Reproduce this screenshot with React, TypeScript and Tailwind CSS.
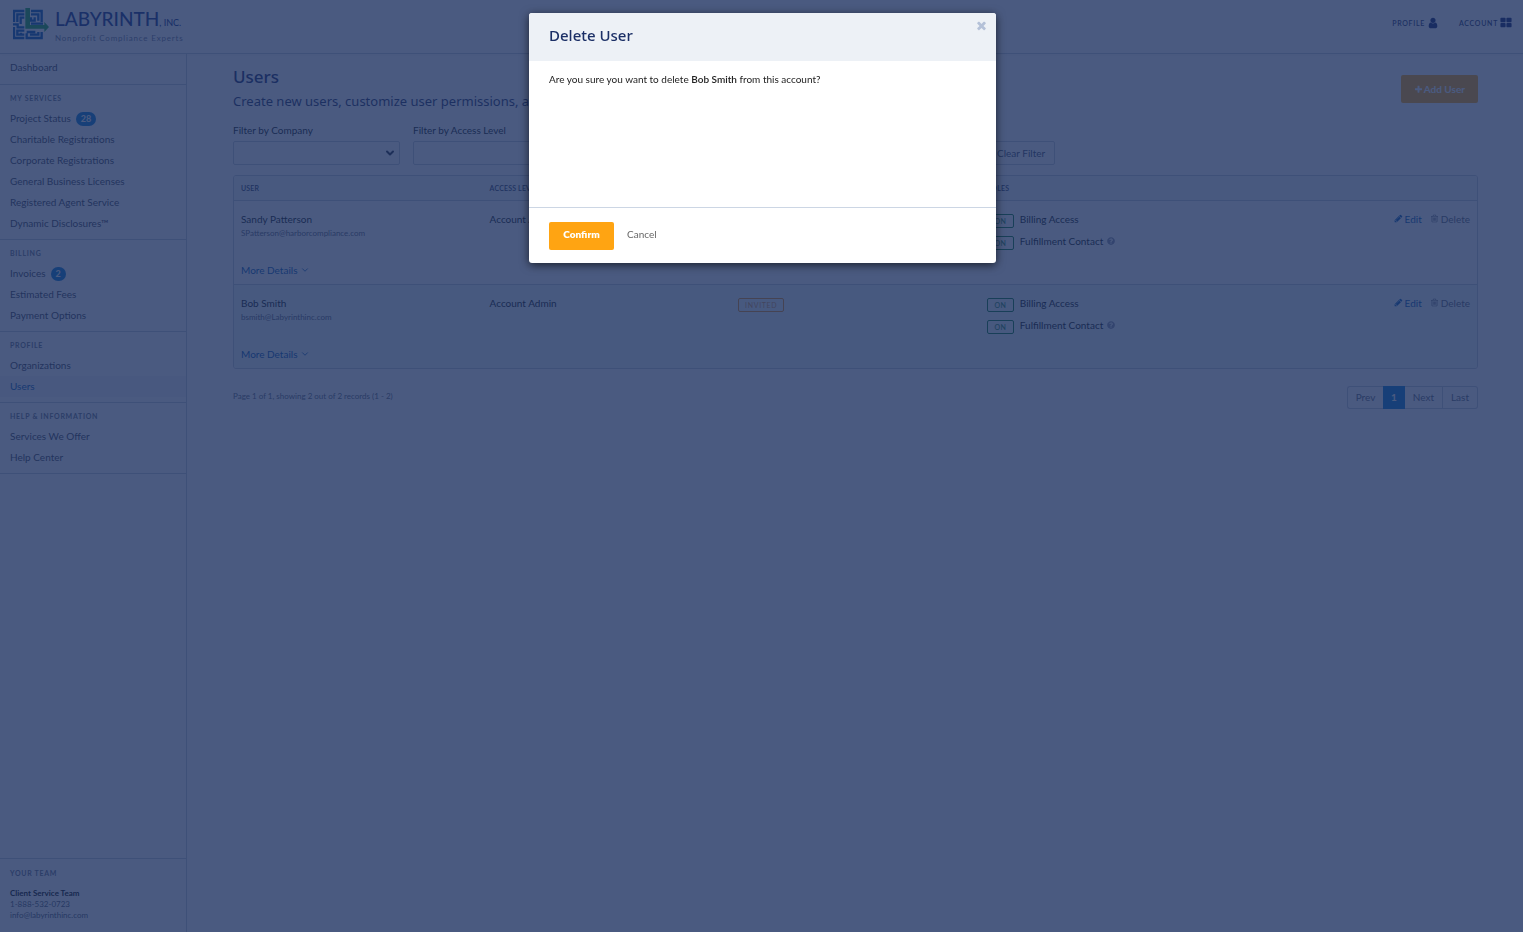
import type { ReactNode } from "react";
import { ChevronDown } from "lucide-react";
import { FaQuestionCircle } from "react-icons/fa";

const GLYPHS = {
  user: "M1536 1399q0 109-62.5 187t-150.5 78h-854q-88 0-150.5-78t-62.5-187q0-85 8.5-160.5t31.5-152 58.5-131 94-89 134.5-34.5q131 128 313 128t313-128q76 0 134.5 34.5t94 89 58.5 131 31.5 152 8.5 160.5zm-256-887q0 159-112.5 271.5t-271.5 112.5-271.5-112.5-112.5-271.5 112.5-271.5 271.5-112.5 271.5 112.5 112.5 271.5z",
  grid: "M832 1024v384q0 52-38 90t-90 38h-512q-52 0-90-38t-38-90v-384q0-52 38-90t90-38h512q52 0 90 38t38 90zm0-768v384q0 52-38 90t-90 38h-512q-52 0-90-38t-38-90v-384q0-52 38-90t90-38h512q52 0 90 38t38 90zm896 768v384q0 52-38 90t-90 38h-512q-52 0-90-38t-38-90v-384q0-52 38-90t90-38h512q52 0 90 38t38 90zm0-768v384q0 52-38 90t-90 38h-512q-52 0-90-38t-38-90v-384q0-52 38-90t90-38h512q52 0 90 38t38 90z",
  times: "M1490 1322q0 40-28 68l-136 136q-28 28-68 28t-68-28l-294-294-294 294q-28 28-68 28t-68-28l-136-136q-28-28-28-68t28-68l294-294-294-294q-28-28-28-68t28-68l136-136q28-28 68-28t68 28l294 294 294-294q28-28 68-28t68 28l136 136q28 28 28 68t-28 68l-294 294 294 294q28 28 28 68z",
  plus: "M1600 736v192q0 40-28 68t-68 28h-416v416q0 40-28 68t-68 28h-192q-40 0-68-28t-28-68v-416h-416q-40 0-68-28t-28-68v-192q0-40 28-68t68-28h416v-416q0-40 28-68t68-28h192q40 0 68 28t28 68v416h416q40 0 68 28t28 68z",
  pencil: "M491 1536l91-91-235-235-91 91v107h128v128h107zm523-928q0-22-22-22-10 0-17 7l-542 542q-7 7-7 17 0 22 22 22 10 0 17-7l542-542q7-7 7-17zm-54-192l416 416-832 832h-416v-416zm683 96q0 53-37 90l-166 166-416-416 166-165q36-38 90-38 53 0 91 38l235 234q37 39 37 91z",
  trash: "M704 736v576q0 14-9 23t-23 9h-64q-14 0-23-9t-9-23v-576q0-14 9-23t23-9h64q14 0 23 9t9 23zm256 0v576q0 14-9 23t-23 9h-64q-14 0-23-9t-9-23v-576q0-14 9-23t23-9h64q14 0 23 9t9 23zm256 0v576q0 14-9 23t-23 9h-64q-14 0-23-9t-9-23v-576q0-14 9-23t23-9h64q14 0 23 9t9 23zm128 724v-948h-896v948q0 22 7 40.5t14.5 27 10.5 8.5h832q3 0 10.5-8.5t14.5-27 7-40.5zm-672-1076h448l-48-117q-7-9-17-11h-317q-10 2-17 11zm928 32v64q0 14-9 23t-23 9h-96v948q0 83-47 143.5t-113 60.5h-832q-66 0-113-58.5t-47-141.5v-952h-96q-14 0-23-9t-9-23v-64q0-14 9-23t23-9h309l70-167q15-37 54-63t79-26h320q40 0 79 26t54 63l70 167h309q14 0 23 9t9 23z",
};

function Glyph({ name, className }: { name: keyof typeof GLYPHS; className: string }) {
  return (
    <svg viewBox="0 0 1792 1792" className={`shrink-0 fill-current ${className}`} aria-hidden="true">
      <path d={GLYPHS[name]} />
    </svg>
  );
}

function Logo() {
  return (
    <a href="#" className="flex items-start gap-1.5">
      <svg viewBox="0 0 108 96" className="h-8 w-9 shrink-0" fill="none" aria-hidden="true">
        <g stroke="#0058b4" strokeWidth="7">
          <path d="M3 42V9H34M13 42V19H34M23 48V29H34" />
          <path d="M54 9H86V42M54 19H76V38M54 28v10h11V28M54 47h36" />
          <path d="M0 49H14v9H34M3 57v33H34M34 68H13v12h11v-6M34 80h-8" />
          <path d="M86 72v18H41V76M51 80h25v-8M41 72h26" />
        </g>
        <path d="M37 0h14v51h43v-9l14 15-14 15v-10H37z" fill="#18a548" />
      </svg>
      <span className="flex flex-col text-[#0f2f86]">
        <span className="flex items-baseline text-[19px] leading-[22px] font-medium">
          LABYRINTH<span className="text-[9px]">, INC.</span>
        </span>
        <span className="text-[8px] leading-[9px] tracking-widest text-[#6d7591]">Nonprofit Compliance Experts</span>
      </span>
    </a>
  );
}

type Item = { label: string; count?: number; active?: boolean };
const NAV: { title?: string; items: Item[] }[] = [
  { items: [{ label: "Dashboard" }] },
  {
    title: "MY SERVICES",
    items: [
      { label: "Project Status", count: 28 },
      { label: "Charitable Registrations" },
      { label: "Corporate Registrations" },
      { label: "General Business Licenses" },
      { label: "Registered Agent Service" },
      { label: "Dynamic Disclosures™" },
    ],
  },
  {
    title: "BILLING",
    items: [{ label: "Invoices", count: 2 }, { label: "Estimated Fees" }, { label: "Payment Options" }],
  },
  { title: "PROFILE", items: [{ label: "Organizations" }, { label: "Users", active: true }] },
  { title: "HELP & INFORMATION", items: [{ label: "Services We Offer" }, { label: "Help Center" }] },
];

function NavLabel({ children }: { children: ReactNode }) {
  return <h2 className="px-2.5 text-[7px] leading-[10px] font-bold tracking-widest text-[#667085]">{children}</h2>;
}

function Sidebar() {
  return (
    <aside className="flex w-[187px] shrink-0 flex-col justify-between border-r border-[#c3cad6]">
      <nav>
        {NAV.map(({ title, items }, i) => (
          <section key={i} className={`border-b border-[#c3cad6] ${title ? "pt-2 pb-[5px]" : "pt-[3px] pb-1.5"}`}>
            {title && <NavLabel>{title}</NavLabel>}
            <ul className={title ? "pt-[5px]" : ""}>
              {items.map(({ label, count, active }) => (
                <li key={label}>
                  <a
                    href="#"
                    className={`flex items-center gap-[5px] px-2.5 leading-[21px] ${active ? "bg-[#f3f4f8] text-[#0058b4]" : "text-[#3b4252]"}`}
                  >
                    {label}
                    {count && (
                      <span className="rounded-full bg-[#0078d4] px-[5px] text-[9px] leading-[14px] font-bold text-white">
                        {count}
                      </span>
                    )}
                  </a>
                </li>
              ))}
            </ul>
          </section>
        ))}
      </nav>
      <section className="border-t border-[#c3cad6] pt-[9px] pb-[11px]">
        <NavLabel>YOUR TEAM</NavLabel>
        <address className="flex flex-col px-2.5 pt-2.5 text-[8px] leading-[11px] text-[#4c566a] not-italic">
          <strong className="text-black">Client Service Team</strong>
          <a href="#">1-888-532-0723</a>
          <a href="#">info@labyrinthinc.com</a>
        </address>
      </section>
    </aside>
  );
}

function Filter({ id, label }: { id: string; label: string }) {
  return (
    <div className="flex w-[167px] flex-col gap-[3px]">
      <label htmlFor={id} className="leading-4">
        {label}
      </label>
      <div className="grid items-center">
        <select
          id={id}
          className="col-start-1 row-start-1 h-6 w-full appearance-none rounded-xs border border-[#c3cad6] bg-transparent px-2"
        />
        <ChevronDown
          className="pointer-events-none col-start-1 row-start-1 mr-1 size-3 justify-self-end text-[#222b3d]"
          strokeWidth={4}
        />
      </div>
    </div>
  );
}

type User = { name: string; email: string; access: string; invited: boolean };
const USERS: User[] = [
  { name: "Sandy Patterson", email: "SPatterson@harborcompliance.com", access: "Account Admin", invited: false },
  { name: "Bob Smith", email: "bsmith@Labyrinthinc.com", access: "Account Admin", invited: true },
];

function Role({ label, help }: { label: string; help?: boolean }) {
  return (
    <li className="flex items-start">
      <span className="mt-[3px] mr-1.5 w-[27px] rounded-xs border border-[#067a3a] text-center text-[7px] leading-3 font-semibold tracking-wide text-[#2e8a5c]">
        ON
      </span>
      {label}
      {help && <FaQuestionCircle className="mt-1 ml-1 size-2 text-[#8a93a8]" aria-label="Help" />}
    </li>
  );
}

function UserTable() {
  return (
    <div className="mt-2.5 overflow-hidden rounded-[3px] border border-[#c3cad6]">
      <table className="w-full table-fixed border-collapse text-left">
        <thead className="bg-[#f5f8fb] text-[7px] tracking-wide text-[#2b3a5e]">
          <tr className="h-6 border-b border-[#c3cad6]">
            <th className="px-[7px] font-semibold">USER</th>
            <th className="px-[7px] font-semibold">ACCESS LEVEL</th>
            <th className="px-[7px] font-semibold">STATUS</th>
            <th className="px-[7px] font-semibold">ROLES</th>
            <th className="px-[7px]" aria-label="Actions" />
          </tr>
        </thead>
        <tbody>
          {USERS.map((u) => (
            <tr
              key={u.name}
              className="h-[84px] border-b border-[#c3cad6] align-top leading-4 last:border-b-0 last:bg-[#eef7f9]"
            >
              <td className="px-[7px] pt-2.5">
                <p>{u.name}</p>
                <p className="text-[8px] leading-3 text-[#5b6475]">{u.email}</p>
                <button type="button" className="mt-[23px] flex items-center gap-0.5 text-[#0058b4]">
                  More Details
                  <ChevronDown className="size-2.5" strokeWidth={2} />
                </button>
              </td>
              <td className="px-[7px] pt-2.5">{u.access}</td>
              <td className="px-[7px] pt-[13px]">
                {u.invited && (
                  <span className="flex h-[14px] w-[46px] items-center justify-center rounded-xs border border-[#e58a1f] text-[7px] tracking-widest text-[#d99650]">
                    INVITED
                  </span>
                )}
              </td>
              <td className="px-[7px] pt-2.5">
                <ul className="flex flex-col gap-[5px]">
                  <Role label="Billing Access" />
                  <Role label="Fulfillment Contact" help />
                </ul>
              </td>
              <td className="px-[7px] pt-2.5">
                <div className="flex justify-end gap-2">
                  <button type="button" className="flex items-center gap-0.5 text-[#0058b4]">
                    <Glyph name="pencil" className="size-[9px]" />
                    Edit
                  </button>
                  <button type="button" className="flex items-center gap-0.5 text-[#5b6475]">
                    <Glyph name="trash" className="size-[9px]" />
                    Delete
                  </button>
                </div>
              </td>
            </tr>
          ))}
        </tbody>
      </table>
    </div>
  );
}

function Pagination() {
  return (
    <div className="mt-[17px] flex items-start justify-between">
      <p className="text-[8px] leading-5 text-[#5b6475]">Page 1 of 1, showing 2 out of 2 records (1 - 2)</p>
      <div className="flex h-[23px] items-stretch text-[#5b6475]">
        <button type="button" className="w-9 rounded-l-[3px] border border-r-0 border-[#c3cad6] pb-px">
          Prev
        </button>
        <button type="button" className="w-[22px] bg-[#0078d4] pb-px font-bold text-white" aria-current="page">
          1
        </button>
        <button type="button" className="w-[38px] border border-l-0 border-[#c3cad6] pb-px">
          Next
        </button>
        <button type="button" className="w-[35px] rounded-r-[3px] border border-l-0 border-[#c3cad6] pb-px">
          Last
        </button>
      </div>
    </div>
  );
}

function DeleteDialog() {
  return (
    <div className="fixed inset-0 flex items-start justify-center bg-[#1d3160]/80 pt-[13px] pl-0.5">
      <div
        role="dialog"
        aria-modal="true"
        aria-labelledby="dialog-title"
        className="relative w-[467px] overflow-hidden rounded-[3px] bg-white shadow-[0_2px_10px_rgba(0,0,0,0.65)]"
      >
        <header className="bg-[#edf1f6] px-5 pt-2.5 pb-3.5">
          <h2 id="dialog-title" className="font-['Noto_Sans',sans-serif] text-[15px] leading-6 font-medium text-[#1b2f66]">
            Delete User
          </h2>
          <button type="button" aria-label="Close" className="absolute top-1.5 right-2 text-[#b4c1d8]">
            <Glyph name="times" className="size-[13px]" />
          </button>
        </header>
        <p className="min-h-[146px] px-5 pt-2.5 leading-4 text-[#222222]">
          Are you sure you want to delete <strong className="font-semibold">Bob Smith</strong> from this account?
        </p>
        <footer className="flex items-center gap-[13px] border-t border-[#ccd6e4] px-5 pt-3.5 pb-[13px]">
          <button type="button" className="h-7 w-[65px] rounded-xs bg-[#ffa412] pb-[3px] font-extrabold text-white">
            Confirm
          </button>
          <button type="button" className="pb-[3px] text-[#666666]">
            Cancel
          </button>
        </footer>
      </div>
    </div>
  );
}

export default function App() {
  return (
    <div className="flex min-h-screen flex-col bg-white font-['Lato','Open_Sans',sans-serif] text-[10px] text-[#0c1220]">
      <header className="flex h-[54px] items-start justify-between border-b border-[#c3cad6] pt-2 pr-[11px] pl-[13px] shadow-xs">
        <Logo />
        <div className="flex gap-5 pt-2 text-[7px] leading-[14px] font-semibold tracking-widest text-[#1b2f66]">
          <button type="button" className="flex items-center gap-0.5">
            PROFILE
            <Glyph name="user" className="size-3 text-[#0a1f6b]" />
          </button>
          <button type="button" className="flex items-center gap-0.5">
            ACCOUNT
            <Glyph name="grid" className="size-3 text-[#0a1f6b]" />
          </button>
        </div>
      </header>
      <div className="flex grow">
        <Sidebar />
        <main className="grow pt-3 pr-[45px] pl-[46px]">
          <div className="flex items-start justify-between">
            <div className="font-['Noto_Sans',sans-serif]">
              <h1 className="text-[17px] leading-[22px] font-medium text-[#14286a]">Users</h1>
              <p className="pt-[3px] text-[13px] leading-5 text-[#1b2f66]">
                Create new users, customize user permissions, and manage access.
              </p>
            </div>
            <button
              type="button"
              className="mt-[9px] flex h-7 items-center gap-px rounded-xs bg-[#ffa412] px-[13px] font-bold text-white"
            >
              <Glyph name="plus" className="size-[9px]" />
              Add User
            </button>
          </div>
          <form className="mt-[11px] flex items-end gap-[13px]">
            <Filter id="company" label="Filter by Company" />
            <Filter id="access" label="Filter by Access Level" />
            <input
              aria-label="Filter by Name"
              className="h-6 w-[381px] rounded-xs border border-[#c3cad6] px-2"
            />
            <button type="button" className="h-6 rounded-xs border border-[#c3cad6] px-[9px] text-[#3b4a66]">
              Clear Filter
            </button>
          </form>
          <UserTable />
          <Pagination />
        </main>
      </div>
      <DeleteDialog />
    </div>
  );
}
